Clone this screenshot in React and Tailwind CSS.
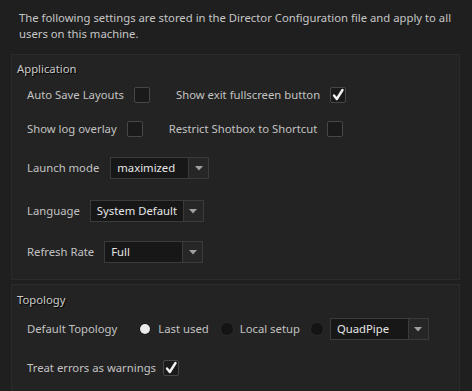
import React from 'react';

function Checkbox({ checked }) {
  return (
    <div className="w-[16px] h-[16px] border border-[#474747] bg-[#1a1a1a] rounded-[2px] flex items-center justify-center shrink-0">
      {checked && (
        <svg width="14" height="14" viewBox="0 0 14 14">
          <path d="M3 7.5 L5.8 11 L11.5 2" fill="none" stroke="#f2f2f2" strokeWidth="2.4" strokeLinecap="round" strokeLinejoin="round" />
        </svg>
      )}
    </div>
  );
}

function Radio({ checked }) {
  return (
    <div className="w-[14px] h-[14px] rounded-full bg-[#141414] border border-[#2a2a2a] flex items-center justify-center shrink-0">
      {checked && <div className="w-[10px] h-[10px] rounded-full bg-[#ebebeb]" />}
    </div>
  );
}

function Combo({ value, width }) {
  return (
    <div className={`flex h-[22px] border border-[#3b3b3b] bg-[#171717] shrink-0 ${width}`}>
      <div className="flex-1 flex items-center pl-[6px] pr-[6px] text-[#e6e6e6] whitespace-nowrap">{value}</div>
      <div className="w-[20px] border-l border-[#3b3b3b] bg-[#262626] flex items-center justify-center">
        <svg width="8" height="5" viewBox="0 0 8 5">
          <path d="M0 0 L8 0 L4 4.5 Z" fill="#a0a0a0" />
        </svg>
      </div>
    </div>
  );
}

export default function App() {
  return (
    <div className="w-[472px] h-[391px] overflow-hidden bg-[#1f1f1f] text-[#c2c2c2] text-[11.3px] leading-[16px] font-['Noto_Sans','Segoe_UI',sans-serif]">
      <p className="pl-[19px] pt-[10px] text-[#c6c6c6] whitespace-nowrap">
        The following settings are stored in the Director Configuration file and apply to all
        <br />
        users on this machine.
      </p>

      <section className="mt-[12px] ml-[11px] w-[449px] h-[226px] border border-[#2b2b2b] bg-[#232323] pt-[6px]">
        <h2 className="pl-[5px] text-[#cacaca] [text-shadow:1px_1px_1px_#000]">Application</h2>
        <div className="pl-[15px]">
          <div className="h-[36px] flex items-center">
            <span>Auto Save Layouts</span>
            <div className="ml-[10px]"><Checkbox /></div>
            <span className="ml-[26px]">Show exit fullscreen button</span>
            <div className="ml-[10px]"><Checkbox checked /></div>
          </div>
          <div className="h-[32px] flex items-center">
            <span>Show log overlay</span>
            <div className="ml-[10px]"><Checkbox /></div>
            <span className="ml-[26px]">Restrict Shotbox to Shortcut</span>
            <div className="ml-[10px]"><Checkbox /></div>
          </div>
          <div className="h-[46px] flex items-center">
            <span>Launch mode</span>
            <div className="ml-[11px]"><Combo value="maximized" width="w-[99px]" /></div>
          </div>
          <div className="h-[40px] flex items-center">
            <span>Language</span>
            <div className="ml-[10px]"><Combo value="System Default" /></div>
          </div>
          <div className="h-[42px] flex items-center">
            <span>Refresh Rate</span>
            <div className="ml-[10px]"><Combo value="Full" width="w-[99px]" /></div>
          </div>
        </div>
      </section>

      <section className="mt-[4px] ml-[11px] w-[449px] h-[110px] border border-[#2b2b2b] bg-[#232323] pt-[7px]">
        <h2 className="pl-[5px] text-[#cacaca] [text-shadow:1px_1px_1px_#000]">Topology</h2>
        <div className="pl-[15px]">
          <div className="h-[42px] flex items-center">
            <span>Default Topology</span>
            <div className="ml-[21px]"><Radio checked /></div>
            <span className="ml-[6px]">Last used</span>
            <div className="ml-[11px]"><Radio /></div>
            <span className="ml-[6px]">Local setup</span>
            <div className="ml-[10px]"><Radio /></div>
            <div className="ml-[6px]"><Combo value="QuadPipe" width="w-[99px]" /></div>
          </div>
          <div className="h-[36px] flex items-center">
            <span>Treat errors as warnings</span>
            <div className="ml-[7px]"><Checkbox checked /></div>
          </div>
        </div>
      </section>
    </div>
  );
}
